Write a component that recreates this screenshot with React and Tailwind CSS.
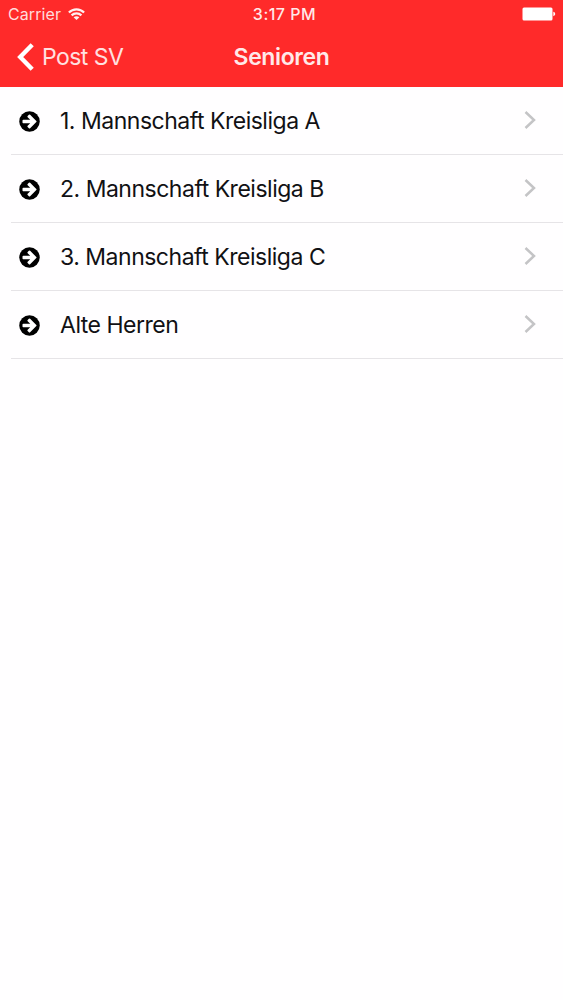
const teams = [
    { id: 1, name: "1. Mannschaft Kreisliga A" },
    { id: 2, name: "2. Mannschaft Kreisliga B" },
    { id: 3, name: "3. Mannschaft Kreisliga C" },
    { id: 4, name: "Alte Herren" },
];

const WifiIcon = () => (
    <svg className="mb-px w-[17px] h-[12px] text-[#fff0f0]" viewBox="0 0 17 12" fill="none" stroke="currentColor" strokeWidth="2.2">
        <path d="M0.9 4.5C5.1 0.2 11.9 0.2 16.1 4.5" />
        <path d="M3.6 7.4C6.3 4.7 10.7 4.7 13.4 7.4" />
        <path d="M8.5 12L5.6 9.3C7.3 7.9 9.7 7.9 11.4 9.3Z" fill="currentColor" stroke="none" />
    </svg>
)

const BatteryIcon = () => (
    <svg className="w-[34px] h-[14px]" viewBox="0 0 34 14" fill="currentColor">
        <rect x="0.5" y="0.5" width="30" height="13" rx="1.5" />
        <path d="M31.3 4.8C33.8 5.2 33.8 8.8 31.3 9.2Z" />
    </svg>
)

const ArrowCircle = () => (
    <svg className="size-[21px] text-black" viewBox="0 0 1536 1536">
        <circle cx="768" cy="768" r="750" fill="currentColor" />
        <path fill="#ffffff" d="M1285 768q0 27-18 45l-91 91-362 362q-18 18-45 18t-45-18l-91-91q-18-18-18-45t18-45l189-189H320q-26 0-45-19t-19-45V704q0-26 19-45t45-19h502L633 451q-19-19-19-45t19-45l91-91q18-18 45-18t45 18l362 362 91 91q18 18 18 45z" />
    </svg>
)

const StatusBar = () => {
    return (
        <div className="grid grid-cols-3 items-center h-7 pl-2 pr-[7px] text-[16px] leading-7">
            <div className="flex items-center gap-[7px] text-[#ffdcdc]">
                <span className="tracking-[0.1px]">Carrier</span>
                <WifiIcon />
            </div>
            <div className="pl-[5px] text-center font-medium tracking-[0.5px] text-[#ffe9e9]">3:17 PM</div>
            <div className="flex justify-end text-white"><BatteryIcon /></div>
        </div>
    )
}

const NavBar = () => {
    return (
        <div className="grid grid-cols-3 items-center h-[59px] pl-[17px] pr-[17px] pb-px text-[23px] leading-7">
            <button className="flex items-center gap-[7px] text-[#ffe0e0]">
                <svg className="w-[18px] h-[28px] text-white" viewBox="0 0 18 28" fill="none" stroke="currentColor" strokeWidth="4.4">
                    <path d="M15.2 1.7L3.2 14L15.2 26.3" />
                </svg>
                <span className="tracking-[-0.55px]">Post SV</span>
            </button>
            <h1 className="text-center font-semibold tracking-[-0.4px] text-[#ffe9e9]">Senioren</h1>
        </div>
    )
}

const TeamRow = ({ name }) => {
    return (
        <li className="flex items-center h-[68px] ml-[11px] pl-2 pr-[27px] border-b border-[#e6e4e7]">
            <div className="pt-px"><ArrowCircle /></div>
            <span className="ml-5 flex-1 text-[23px] leading-7 tracking-[-0.49px] text-[#111114]">{name}</span>
            <svg className="mb-px w-[12px] h-[18px] text-[#c4c4c6]" viewBox="0 0 12 18" fill="none" stroke="currentColor" strokeWidth="2.5">
                <path d="M1.5 1L10 9L1.5 17" />
            </svg>
        </li>
    )
}

const App = () => {
    return (
        <div className="min-h-screen bg-[#fffeff] font-['Inter','Liberation_Sans',sans-serif]">
            <header className="bg-[#ff2a2a]">
                <StatusBar />
                <NavBar />
            </header>
            <ul>
                {teams.map((team) => <TeamRow key={team.id} name={team.name} />)}
            </ul>
        </div>
    )
}

export default App;
